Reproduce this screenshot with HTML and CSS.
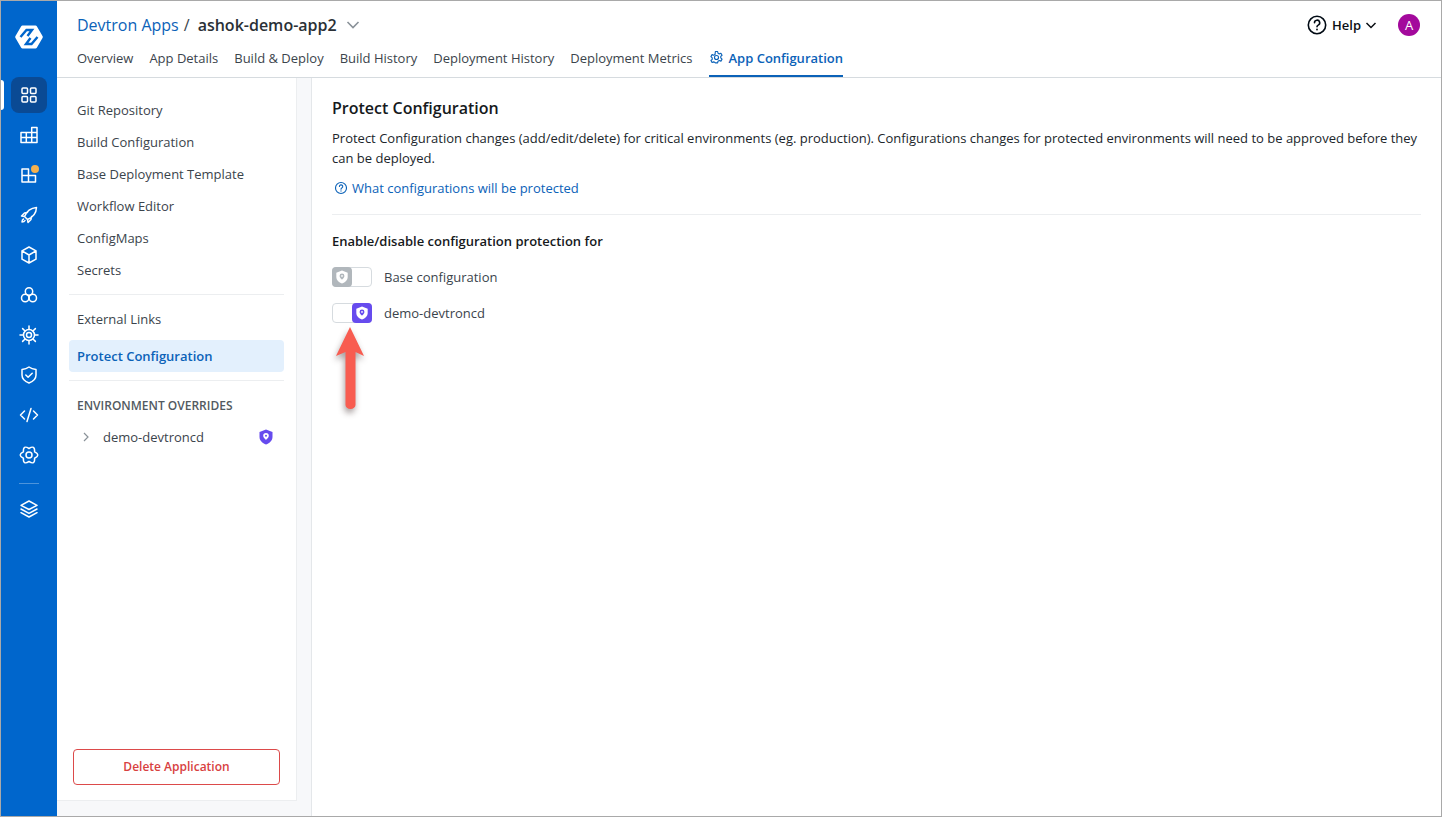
FILE: index.html
```html
<!DOCTYPE html>
<html lang="en">
<head>
<meta charset="utf-8">
<title>Protect Configuration</title>
<link rel="stylesheet" href="styles.css">
</head>
<body>
<div class="frame">
  <aside class="rail">
    <svg class="logo" viewBox="0 0 28 24" width="28" height="24"><path d="M7.500.5h13a1.500 1.500 0 0 1 1.300.7l5.700 9.800a2 2 0 0 1 0 2l-5.700 9.800a1.500 1.500 0 0 1-1.300.7h-13a1.500 1.500 0 0 1-1.300-.7L.5 13a2 2 0 0 1 0-2l5.700-9.800a1.500 1.500 0 0 1 1.300-.7z" fill="#fff"/><path d="M5.500 12 11.500 5H17L12.500 11M22.500 12 16.500 19H11L15.500 13" fill="none" stroke="#0066cc" stroke-width="2.400"/></svg>
    <div class="rail-items">
      <span class="rail-mark"></span>
      <a class="rail-btn active"><svg viewBox="0 0 20 20"><rect x="3" y="3" width="5.500" height="5.500" rx="1"/><rect x="11.500" y="3" width="5.500" height="5.500" rx="1"/><rect x="3" y="11.500" width="5.500" height="5.500" rx="1"/><rect x="11.500" y="11.500" width="5.500" height="5.500" rx="1"/></svg></a>
      <a class="rail-btn"><svg viewBox="0 0 20 20"><path d="M12.700 7.500V2.500H18V17.500H2V7.500zM2 12.500H18M7.300 7.500V17.500M12.700 7.500V17.500M12.700 7.500H18"/></svg></a>
      <a class="rail-btn dot"><svg viewBox="0 0 20 20"><path d="M3 4h6.500v6.500H3zM3 10.500h6.500V17H3zM9.500 10.500H16.500V17H9.500z"/></svg></a>
      <a class="rail-btn"><svg viewBox="0 0 20 20"><path d="M7 13 5.500 11.500C7.500 6.500 11.500 3 17.500 2.500 17.200 8.500 13.500 12.500 8.500 14.500zM5.500 11.500 2.500 11 5.500 8 8.500 7.500M8.500 14.500 9 17.500l3-3 .5-3M4.500 14c-1 .5-1.500 2-1.500 3 1 0 2.500-.5 3-1.500"/></svg></a>
      <a class="rail-btn"><svg viewBox="0 0 20 20"><path d="M10 2 17 5.800v8.400L10 18l-7-3.800V5.800zM3 5.800 10 10l7-4.200M10 10v8"/></svg></a>
      <a class="rail-btn"><svg viewBox="0 0 20 20"><circle cx="10" cy="6.500" r="3.700"/><circle cx="6.200" cy="13" r="3.700"/><circle cx="13.800" cy="13" r="3.700"/></svg></a>
      <a class="rail-btn"><svg viewBox="0 0 20 20"><circle cx="10" cy="10" r="5.500"/><circle cx="10" cy="10" r="2.500"/><path d="M10 1v3M10 16v3M1 10h3M16 10h3M3.600 3.600l2.200 2.200M14.200 14.200l2.200 2.200M3.600 16.400l2.200-2.200M14.200 5.800l2.200-2.200"/></svg></a>
      <a class="rail-btn"><svg viewBox="0 0 20 20"><path d="M10 2c2 1.500 4 2.200 7 2.500v5.500c0 4-3 6.500-7 8-4-1.500-7-4-7-8V4.500C6 4.200 8 3.500 10 2zM6.800 10l2.300 2.200 4.100-4"/></svg></a>
      <a class="rail-btn"><svg viewBox="0 0 20 20"><path d="M5.500 6 1.500 10l4 4M14.500 6l4 4-4 4M12 3.500 8 16.500"/></svg></a>
      <a class="rail-btn"><svg viewBox="0 0 20 20"><path d="M10 3.500Q16 -.4 15.600 6.750Q22 10 15.600 13.250Q16 20.400 10 16.500Q4 20.400 4.400 13.250Q-2 10 4.400 6.750Q4 -.4 10 3.500z"/><circle cx="10" cy="10" r="3"/></svg></a>
      <span class="rail-sep"></span>
      <a class="rail-btn"><svg viewBox="0 0 20 20"><path d="M10 2 18 6.300 10 10.500 2 6.300zM2 10l8 4.300 8-4.300M2 13.700 10 18l8-4.300"/></svg></a>
    </div>
  </aside>
  <div class="main">
    <header class="header">
      <div class="header-top">
        <div class="crumbs">
          <a class="crumb-link">Devtron Apps</a><span class="crumb-sep">/</span><span class="crumb-app">ashok-demo-app2</span>
          <svg class="crumb-caret" viewBox="0 0 14 14" width="14" height="14"><path d="M1.500 4 7 9.500 12.500 4"/></svg>
        </div>
        <div class="header-right">
          <svg class="help-icon" viewBox="0 0 20 20" width="20" height="20"><circle cx="10" cy="10" r="8.700"/><path d="M7.500 7.800a2.600 2.600 0 1 1 3.700 2.300c-.8.400-1.200 1-1.200 1.700"/><circle class="fill" cx="10" cy="14.500" r=".9"/></svg>
          <span class="help-label">Help</span>
          <svg class="help-caret" viewBox="0 0 12 12" width="12" height="12"><path d="M1.500 4 6 8.500 10.500 4"/></svg>
          <span class="avatar">A</span>
        </div>
      </div>
      <nav class="tabs">
        <a class="tab">Overview</a>
        <a class="tab">App Details</a>
        <a class="tab">Build &amp; Deploy</a>
        <a class="tab">Build History</a>
        <a class="tab">Deployment History</a>
        <a class="tab">Deployment Metrics</a>
        <a class="tab current"><svg viewBox="0 0 20 20" width="15" height="15"><path d="M8.500 2h3l.5 2.300 1.700.9 2.200-.8 1.500 2.600-1.700 1.600v2l1.700 1.600-1.500 2.600-2.200-.8-1.700.9-.5 2.300h-3L8 16.700l-1.700-.9-2.200.8-1.500-2.600 1.700-1.600v-2L2.600 8.800 4.100 6.200l2.200.8L8 6.100z"/><circle cx="10" cy="10" r="2.700"/></svg>App Configuration</a>
      </nav>
    </header>
    <div class="body">
      <div class="side-wrap">
        <aside class="side">
          <a class="side-item">Git Repository</a>
          <a class="side-item">Build Configuration</a>
          <a class="side-item">Base Deployment Template</a>
          <a class="side-item">Workflow Editor</a>
          <a class="side-item">ConfigMaps</a>
          <a class="side-item">Secrets</a>
          <hr class="side-rule">
          <a class="side-item">External Links</a>
          <a class="side-item selected">Protect Configuration</a>
          <hr class="side-rule">
          <div class="side-heading">ENVIRONMENT OVERRIDES</div>
          <a class="side-env">
            <svg class="env-caret" viewBox="0 0 10 10" width="10" height="10"><path d="M3 1l4 4-4 4"/></svg>
            <span class="env-name">demo-devtroncd</span>
            <svg class="shield" viewBox="0 0 16 16" width="16" height="16"><path d="M8 .5 14.500 3v5c0 3.500-2.800 6.200-6.500 7.500C4.300 14.200 1.500 11.500 1.500 8V3z" fill="#664bee"/><path d="M8 4a2.800 2.800 0 0 0-2.800 2.800C5.200 8.700 8 11 8 11s2.800-2.300 2.800-4.200A2.800 2.800 0 0 0 8 4z" fill="#fff"/><circle cx="8" cy="6.800" r="1" fill="#664bee"/></svg>
          </a>
          <div class="side-foot"><button class="delete-btn">Delete Application</button></div>
        </aside>
      </div>
      <main class="content">
        <h1 class="title">Protect Configuration</h1>
        <p class="desc">Protect Configuration changes (add/edit/delete) for critical environments (eg. production). Configurations changes for protected environments will need to be approved before they can be deployed.</p>
        <a class="doc-link"><svg viewBox="0 0 16 16" width="14" height="14"><circle cx="8" cy="8" r="6.300"/><path d="M6.200 6.300a1.900 1.900 0 1 1 2.700 1.700c-.6.300-.9.700-.9 1.300"/><path d="M8 11.200v.3"/></svg>What configurations will be protected</a>
        <hr class="content-rule">
        <h2 class="sub">Enable/disable configuration protection for</h2>
        <div class="toggle-row">
          <span class="toggle"><span class="thumb off"><svg viewBox="0 0 16 16" width="14" height="14"><path d="M8 .5 14.500 3v5c0 3.500-2.800 6.200-6.500 7.500C4.300 14.200 1.500 11.500 1.500 8V3z" fill="#fff"/><path d="M8 4a2.800 2.800 0 0 0-2.800 2.800C5.200 8.700 8 11 8 11s2.800-2.300 2.800-4.200A2.800 2.800 0 0 0 8 4z" fill="#b1b7bc"/><circle cx="8" cy="6.800" r="1" fill="#fff"/></svg></span></span>
          <span class="toggle-label">Base configuration</span>
        </div>
        <div class="toggle-row">
          <span class="toggle on"><span class="thumb"><svg viewBox="0 0 16 16" width="14" height="14"><path d="M8 .5 14.500 3v5c0 3.500-2.800 6.200-6.500 7.500C4.300 14.200 1.500 11.500 1.500 8V3z" fill="#fff"/><path d="M8 4a2.800 2.800 0 0 0-2.800 2.800C5.200 8.700 8 11 8 11s2.800-2.300 2.800-4.200A2.800 2.800 0 0 0 8 4z" fill="#664bee"/><circle cx="8" cy="6.800" r="1" fill="#fff"/></svg></span></span>
          <span class="toggle-label">demo-devtroncd</span>
        </div>
      </main>
    </div>
  </div>
  <svg class="arrow" viewBox="0 0 40 92" width="40" height="92"><path d="M20 0 34 29 25.500 25 25.500 78a5 4 0 0 1-10 0L15.500 25 6 29z" fill="#f85c50"/></svg>
</div>
</body>
</html>
```
FILE: styles.css
```css
* { box-sizing: border-box; }
html, body { margin: 0; height: 100%; }
body { font-family: "Open Sans", "Liberation Sans", sans-serif; font-size: 13px; color: #3b444c; background: #fff; }
.frame { position: relative; display: flex; width: 1442px; height: 817px; border: 1px solid #a9a9a9; overflow: hidden; }

.rail { flex: 0 0 56px; background: #0066cc; display: flex; flex-direction: column; align-items: center; padding-top: 24px; }
.logo { display: block; }
.rail-items { position: relative; margin-top: 28px; width: 100%; display: flex; flex-direction: column; align-items: center; }
.rail-mark { position: absolute; left: 0; top: 3px; width: 3px; height: 30px; background: #fff; border-radius: 0 3px 3px 0; }
.rail-btn { position: relative; display: flex; align-items: center; justify-content: center; width: 36px; height: 36px; margin-bottom: 4px; border-radius: 8px; }
.rail-btn.active { background: #0a4a94; }
.rail-btn svg { width: 20px; height: 20px; fill: none; stroke: #fff; stroke-width: 1.500; stroke-linejoin: round; stroke-linecap: round; }
.rail-btn.dot::after { content: ""; position: absolute; top: 8px; right: 8px; width: 8px; height: 8px; border-radius: 50%; background: #f5b14e; }
.rail-sep { display: block; width: 20px; height: 1px; background: #4d94db; margin: 6px 0 7px; }

.main { flex: 1; min-width: 0; display: flex; flex-direction: column; }
.header { flex: 0 0 77px; background: #fff; border-bottom: 1px solid #d6dbdf; padding: 0 21px 0 20px; display: flex; flex-direction: column; }
.header-top { flex: 0 0 47px; display: flex; justify-content: space-between; align-items: center; }
.crumbs { display: flex; align-items: center; font-size: 16px; }
.crumb-link { color: #0b62b8; }
.crumb-sep { color: #3b444c; margin: 0 8px 0 5px; }
.crumb-app { font-weight: 600; color: #2a3036; }
.crumb-caret { margin-left: 9px; fill: none; stroke: #8a9299; stroke-width: 1.600; }
.header-right { display: flex; align-items: center; }
.help-icon { fill: none; stroke: #000a14; stroke-width: 1.600; stroke-linecap: round; }
.help-icon .fill { fill: #000a14; stroke: none; }
.help-label { margin-left: 5px; font-weight: 600; color: #0b0f14; }
.help-caret { margin-left: 4px; fill: none; stroke: #0b0f14; stroke-width: 1.500; }
.avatar { margin-left: 21px; width: 22px; height: 22px; border-radius: 50%; background: #a3099c; color: #fff; font-size: 13px; display: flex; align-items: center; justify-content: center; }
.tabs { display: flex; gap: 16px; flex: 1; }
.tab { display: flex; align-items: flex-start; height: 29px; line-height: 20px; color: #3b444c; white-space: nowrap; }
.tab.current { color: #0b62b8; font-weight: 600; border-bottom: 2px solid #0b62b8; }
.tab svg { margin: 2px 5px 0 0; fill: none; stroke: #0b62b8; stroke-width: 1.500; stroke-linejoin: round; }

.body { flex: 1; min-height: 0; display: flex; background: #f7f8fa; }
.side-wrap { flex: 0 0 254px; border-right: 1px solid #e4e7ea; padding: 0 14px 15px 0; display: flex; }
.side { width: 240px; background: #fff; border-right: 1px solid #eceef0; border-bottom: 1px solid #eceef0; padding: 16px 12px 0 12px; display: flex; flex-direction: column; }
.side-item { display: flex; align-items: center; height: 32px; padding-left: 8px; border-radius: 4px; color: #3b444c; white-space: nowrap; }
.side-item.selected { color: #0b62b8; font-weight: 600; background: #e3f0fd; margin-top: 5px; }
.side-rule { width: 100%; height: 1px; border: 0; background: #eceef0; margin: 8px 0; }
.side-heading { margin-top: 1px; padding-left: 8px; font-size: 12px; font-weight: 600; color: #525a61; line-height: 32px; height: 31px; }
.side-env { display: flex; align-items: center; height: 32px; padding-left: 12px; }
.env-caret { fill: none; stroke: #8a9299; stroke-width: 1.200; }
.env-name { margin-left: 12px; flex: 1; }
.shield { margin-right: 10px; }
.side-foot { margin-top: auto; padding: 0 4px 15px 4px; }
.delete-btn { display: block; width: 207px; height: 36px; padding: 0 0 2px; background: #fff; border: 1px solid #dc4a4a; border-radius: 4px; color: #d8413f; font: 600 12px "Open Sans", "Liberation Sans", sans-serif; }

.content { flex: 1; min-width: 0; background: #fff; padding: 19px 20px 0 20px; }
.title { margin: 0; font-size: 16px; font-weight: 600; line-height: 22px; color: #16191c; }
.desc { margin: 9px 0 0; line-height: 20px; color: #20262b; }
.doc-link { display: flex; align-items: center; margin-top: 10px; height: 20px; color: #0b62b8; }
.doc-link svg { margin: 0 4px 0 2px; fill: none; stroke: #0b62b8; stroke-width: 1.300; stroke-linecap: round; }
.content-rule { height: 1px; border: 0; background: #eceef0; margin: 16px 0 0; }
.sub { margin: 16px 0 0; font-size: 13px; font-weight: 600; line-height: 20px; color: #16191c; }
.toggle-row { display: flex; align-items: center; margin-top: 16px; height: 20px; }
.toggle { display: flex; width: 40px; height: 20px; border: 1px solid #d6dbdf; border-radius: 4px; background: #fff; }
.toggle.on { justify-content: flex-end; }
.thumb { flex: 0 0 20px; height: 20px; margin: -1px; border-radius: 4px; background: #664bee; display: flex; align-items: center; justify-content: center; }
.thumb.off { background: #b1b7bc; }
.toggle-label { margin-left: 12px; color: #3b444c; }

.arrow { position: absolute; left: 329px; top: 326px; filter: drop-shadow(-1px 4px 3px rgba(60, 40, 40, .45)); }
```
